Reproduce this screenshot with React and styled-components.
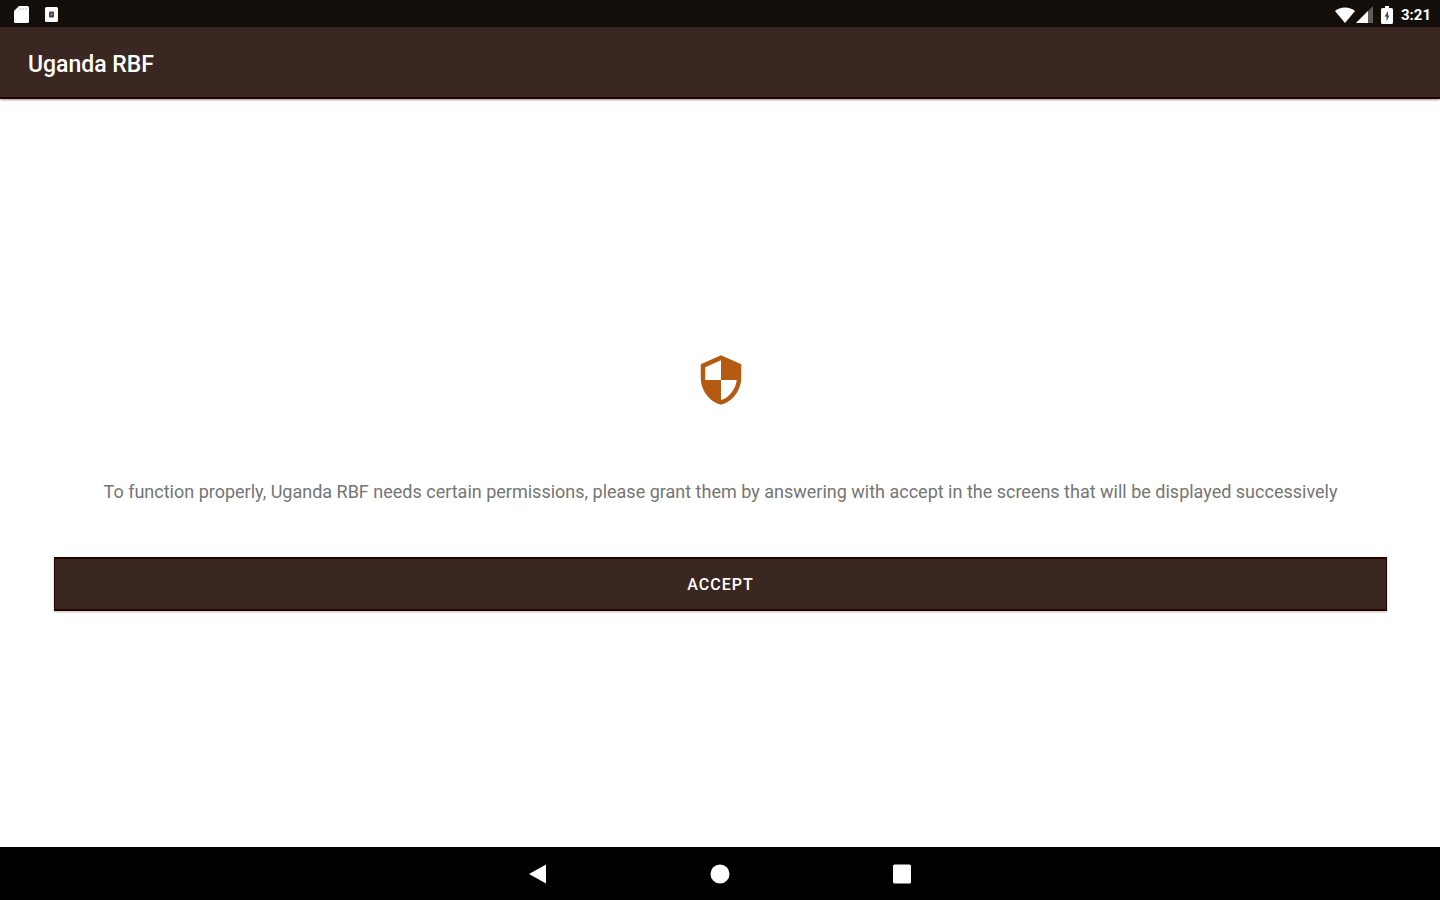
import styled, { createGlobalStyle } from "styled-components";

export default function App() {
  return (
    <>
      <GlobalStyle />
      <Screen>
        <StatusBar>
          <Notifications>
            <SdCardIcon />
            <DebugIcon />
          </Notifications>
          <SystemIcons>
            <Reception>
              <WifiIcon />
              <SignalIcon />
            </Reception>
            <BatteryIcon />
            <Clock>3:21</Clock>
          </SystemIcons>
        </StatusBar>
        <Toolbar>
          <h1>Uganda RBF</h1>
        </Toolbar>
        <Content>
          <ShieldIcon />
          <Message>
            To function properly, Uganda RBF needs certain permissions, please
            grant them by answering with accept in the screens that will be
            displayed successively
          </Message>
          <AcceptButton type="button">ACCEPT</AcceptButton>
        </Content>
        <NavigationBar>
          <NavButton type="button" aria-label="Back">
            <svg width="20" height="20" viewBox="0 0 20 20">
              <path d="M1 10 18 0.5v19z" />
            </svg>
          </NavButton>
          <NavButton type="button" aria-label="Home">
            <svg width="20" height="20" viewBox="0 0 20 20">
              <circle cx="10" cy="10" r="9.5" />
            </svg>
          </NavButton>
          <NavButton type="button" aria-label="Recent apps">
            <svg width="20" height="20" viewBox="0 0 20 20">
              <rect x="1" y="0.5" width="18" height="19" rx="1.5" />
            </svg>
          </NavButton>
        </NavigationBar>
      </Screen>
    </>
  );
}

function SdCardIcon() {
  return (
    <svg width="15" height="17" viewBox="0 0 15 17" fill="#ffffff">
      <path d="M5 0h8.5Q15 0 15 1.5v14Q15 17 13.5 17h-12Q0 17 0 15.5V5z" />
      <path d="M6 2v2M9 2v2M12 2v2" stroke="#b9b7b5" strokeWidth="1" />
    </svg>
  );
}

function DebugIcon() {
  return (
    <svg width="13" height="15" viewBox="0 0 13 15" fill="#ffffff">
      <rect width="13" height="15" rx="1.5" />
      <path d="M4 5.5Q4 4.500 5 4.500h3q1 0 1 1v4q0 1-1 1H5q-1 0-1-1z" fill="#4a4643" />
      <circle cx="6.5" cy="7.5" r="1" fill="#a5a3a1" />
    </svg>
  );
}

function WifiIcon() {
  return (
    <svg width="20" height="16" viewBox="0 0 20 16" fill="#ffffff">
      <path d="M10 16 0 4Q4 0.5 10 0.5T20 4z" />
    </svg>
  );
}

function SignalIcon() {
  return (
    <svg width="17" height="17" viewBox="0 0 17 17" fill="#ffffff">
      <path d="M17 0v17H0z" fill="#5f5b58" />
      <path d="M12 5v12H0z" />
    </svg>
  );
}

function BatteryIcon() {
  return (
    <svg width="12" height="18" viewBox="0 0 12 18" fill="#ffffff">
      <path d="M4 0h4v2h2.500Q12 2 12 3.5v13q0 1.500-1.500 1.500h-9Q0 18 0 16.500v-13Q0 2 1.500 2H4z" />
      <path d="M7 5 3.500 10.500H5.500V15L8.500 9.500H7z" fill="#4a4643" />
    </svg>
  );
}

function ShieldIcon() {
  return (
    <svg width="54" height="54" viewBox="0 0 24 24" fill="#b45a13">
      <path d="M12 1 3 5v6c0 5.550 3.840 10.740 9 12 5.160-1.260 9-6.450 9-12V5l-9-4zm0 10.990h7c-.53 4.120-3.280 7.790-7 8.940V12H5V6.300l7-3.110v8.800z" />
    </svg>
  );
}

const GlobalStyle = createGlobalStyle`
  * {
    box-sizing: border-box;
  }

  body {
    margin: 0;
    background: #ffffff;
    font-family: Roboto, "Liberation Sans", sans-serif;
  }
`;

const Screen = styled.div`
  min-height: 100vh;
  display: flex;
  flex-direction: column;
`;

const StatusBar = styled.div`
  height: 27px;
  padding: 2px 9px 0 14px;
  background: #130e0a;
  display: flex;
  align-items: center;
  justify-content: space-between;
`;

const Notifications = styled.div`
  display: flex;
  align-items: center;
  gap: 16px;
`;

const SystemIcons = styled.div`
  display: flex;
  align-items: center;
  gap: 8px;
`;

const Reception = styled.div`
  display: flex;
  align-items: center;
  gap: 1px;
`;

const Clock = styled.time`
  font-size: 15px;
  font-weight: 700;
  line-height: 20px;
  color: #ffffff;
`;

const Toolbar = styled.header`
  height: 72px;
  padding: 6px 28px 0;
  background: #3a2722;
  border-bottom: 2px solid #260303;
  box-shadow: 0 1px 2px rgba(0, 0, 0, 0.4);
  display: flex;
  align-items: center;

  h1 {
    margin: 0;
    font-size: 23px;
    font-weight: 500;
    line-height: 28px;
    color: #ffffff;
  }
`;

const Content = styled.main`
  flex: 1;
  padding: 18px 53px 0 54px;
  display: flex;
  flex-direction: column;
  align-items: center;
  justify-content: center;
`;

const Message = styled.p`
  margin: 73px 0 53px;
  font-size: 18px;
  line-height: 24px;
  text-align: center;
  color: #757575;
`;

const AcceptButton = styled.button`
  width: 100%;
  height: 54px;
  border: solid #260303;
  border-width: 2px 1px;
  background: #3a2722;
  box-shadow: 0 1px 2px rgba(0, 0, 0, 0.3);
  font-family: inherit;
  font-size: 16px;
  font-weight: 500;
  letter-spacing: 1px;
  color: #ffffff;
`;

const NavigationBar = styled.nav`
  height: 53px;
  background: #000000;
  display: flex;
  align-items: center;
  justify-content: center;
  gap: 128px;
`;

const NavButton = styled.button`
  width: 54px;
  height: 48px;
  padding: 0;
  border: none;
  background: none;
  display: flex;
  align-items: center;
  justify-content: center;

  svg {
    fill: #ffffff;
  }
`;
